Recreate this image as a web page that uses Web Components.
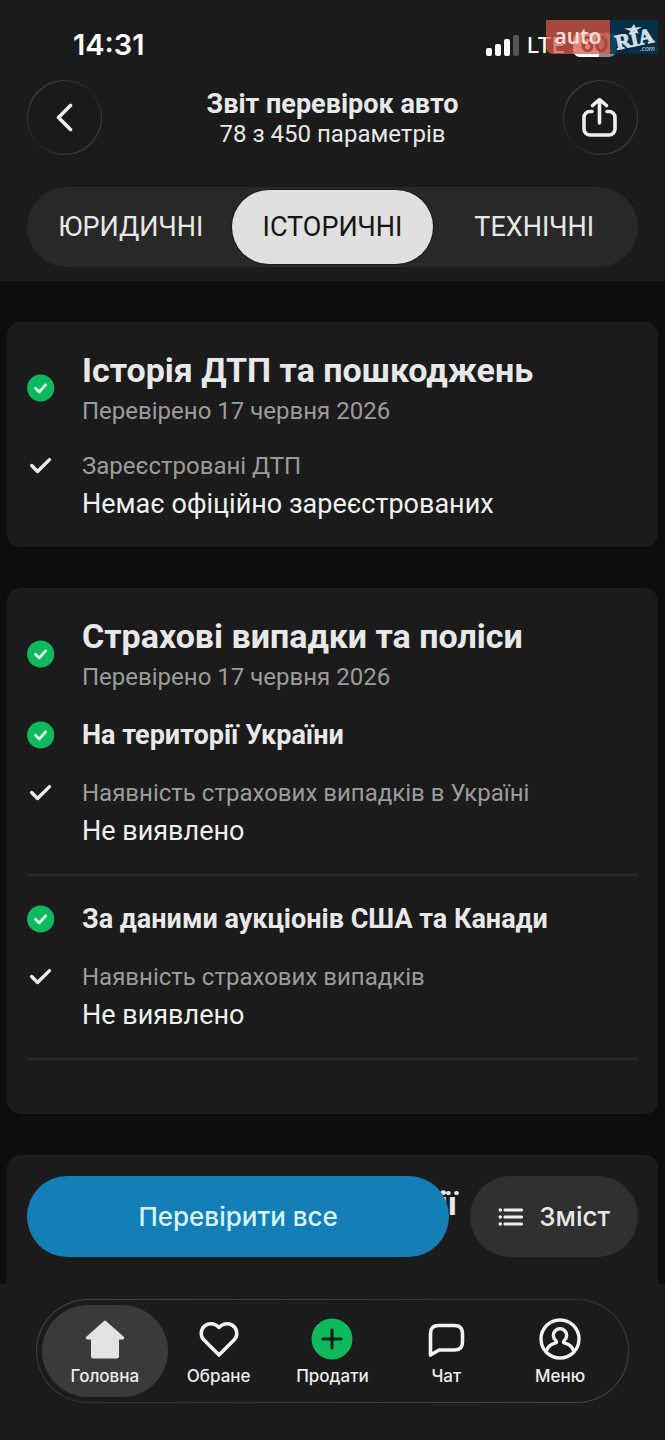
<!DOCTYPE html>
<html lang="uk">
<head>
<meta charset="UTF-8">
<meta name="viewport" content="width=device-width, initial-scale=1">
<title>Звіт перевірок авто</title>
<style>
    body {
        margin: 0;
        background: #0d0d0f;
        color: #e8e8e8;
        font-family: Roboto, "Noto Sans", sans-serif;
    }
</style>
</head>
<body>
<report-app></report-app>

<script>
const RESET = `
    * { box-sizing: border-box; }
    h1, h2, h3, p, ul, dl, dt, dd { margin: 0; padding: 0; }
    button { border: 0; padding: 0; font: inherit; color: inherit; background: none; cursor: pointer; }
    svg { display: block; }
`;

const ICONS = {
    back: `<svg width="18" height="30" viewBox="0 0 18 30" fill="none" stroke="#eee" stroke-width="3.600" stroke-linecap="round" stroke-linejoin="round"><path d="M14.500 2.500 2.500 14.500l12 12"/></svg>`,
    share: `<svg width="38" height="42" viewBox="0 0 38 42" fill="none" stroke="#eee" stroke-width="3.600" stroke-linecap="round" stroke-linejoin="round"><path d="M11 14.500H9a6 6 0 0 0-6 6V32a6 6 0 0 0 6 6h19a6 6 0 0 0 6-6V20.500a6 6 0 0 0-6-6h-2M18.500 26V3M11.500 8.500l7-6 7 6"/></svg>`,
    passed: `<svg width="28" height="28" viewBox="0 0 28 28"><circle cx="13.700" cy="14" r="13.600" fill="#0eb95e"/><path d="m8.500 14.300 3.700 3.700 6.500-7.200" fill="none" stroke="#d6fbe6" stroke-width="2.800" stroke-linecap="round" stroke-linejoin="round"/></svg>`,
    check: `<svg width="28" height="28" viewBox="0 0 28 28" fill="none" stroke="#ececec" stroke-width="3.400" stroke-linecap="round" stroke-linejoin="round"><path d="m4.700 14.500 5.800 6L22.500 8.600"/></svg>`,
    list: `<svg width="26" height="20" viewBox="0 0 26 20" fill="#eee"><circle cx="2.300" cy="3" r="1.800"/><circle cx="2.300" cy="10" r="1.800"/><circle cx="2.300" cy="17" r="1.800"/><rect x="5.500" y="1.400" width="19.500" height="3.200" rx="1.400"/><rect x="5.500" y="8.400" width="19.500" height="3.200" rx="1.400"/><rect x="5.500" y="15.400" width="19.500" height="3.200" rx="1.400"/></svg>`,
    home: `<svg width="42" height="42" viewBox="0 0 42 42" fill="#e3e3e3" stroke="#e3e3e3" stroke-width="2" stroke-linejoin="round"><path d="M21 3.500 39 19.500c.5.600.2 1-.6 1H34V38q0 1.500-1.500 1.500h-23Q8 39.500 8 38V20.500H3.600c-.8 0-1.100-.4-.6-1z"/></svg>`,
    heart: `<svg width="42" height="42" viewBox="0 0 42 42" fill="none" stroke="#f2f2f2" stroke-width="3.600" stroke-linejoin="round"><path d="M21 37 5.800 21.800C1.600 17.500 2.800 9.800 8.300 6.900c4.200-2.200 9.700-1.200 12.700 2.600 3-3.800 8.500-4.800 12.700-2.600 5.500 2.900 6.700 10.600 2.500 14.900z"/></svg>`,
    sell: `<svg width="42" height="42" viewBox="0 0 42 42"><circle cx="21" cy="21" r="20.500" fill="#0eb95e"/><path d="M21 12v18M12 21h18" stroke="#0d1d14" stroke-width="3" stroke-linecap="round"/></svg>`,
    chat: `<svg width="42" height="42" viewBox="0 0 42 42" fill="none" stroke="#f2f2f2" stroke-width="3.600" stroke-linejoin="round"><path d="M5.500 37V15.500q0-8 8-8h16q8 0 8 8v8.500q0 8-8 8H14z"/></svg>`,
    menu: `<svg width="42" height="42" viewBox="0 0 42 42" fill="none" stroke="#f2f2f2" stroke-width="3.400" stroke-linecap="round"><circle cx="21" cy="21" r="19"/><path d="M7 33.500C8.600 29 11.600 26.200 16 25.200c1.600-.4 1.900-1.100 1.200-2-1.700-1.800-2.900-3.500-2.900-5.700a6.700 6.700 0 0 1 13.400 0c0 2.200-1.200 3.900-2.900 5.700-.7.900-.4 1.600 1.200 2 4.400 1 7.400 3.800 9 8.300"/></svg>`
};

class UiIcon extends HTMLElement {
    connectedCallback() {
        this.attachShadow({ mode: 'open' }).innerHTML = `
            <style>
                :host { display: block; flex: none; }
                svg { display: block; }
            </style>
            ${ICONS[this.getAttribute('name')] || ''}
        `;
    }
}

/* Time, signal and battery */
class StatusBar extends HTMLElement {
    connectedCallback() {
        this.attachShadow({ mode: 'open' }).innerHTML = `
            <style>
                ${RESET}
                :host {
                    display: flex;
                    justify-content: space-between;
                    align-items: center;
                    height: 80px;
                    padding: 10px 49px 0 73px;
                    font-family: Inter, sans-serif;
                    color: #fff;
                }
                time { font-size: 29px; line-height: 36px; font-weight: 600; }
                .right { display: flex; align-items: center; gap: 8px; }
                .net { font-size: 22px; line-height: 24px; font-weight: 500; }
                .battery {
                    width: 43px;
                    height: 24px;
                    border-radius: 7px;
                    background: linear-gradient(90deg, #fff 60%, #8c8c8c 60%);
                    color: #1b1b1b;
                    font-size: 21px;
                    line-height: 24px;
                    font-weight: 700;
                    text-align: center;
                }
            </style>
            <time>14:31</time>
            <div class="right">
                <svg width="33" height="22" viewBox="0 0 33 22" fill="#fff"><rect y="14" width="6" height="8" rx="2"/><rect x="9" y="10" width="6" height="12" rx="2"/><rect x="18" y="5" width="6" height="17" rx="2"/><rect x="27" y="1" width="6" height="21" rx="2" fill="#555"/></svg>
                <span class="net">LTE</span>
                <span class="battery">60</span>
            </div>
        `;
    }
}

/* Logo badge that floats over the status bar */
class BrandMark extends HTMLElement {
    connectedCallback() {
        this.attachShadow({ mode: 'open' }).innerHTML = `
            <style>
                :host {
                    position: absolute;
                    top: 20px;
                    right: 7px;
                    display: flex;
                    height: 34px;
                    color: #f6dcd8;
                }
                .auto {
                    width: 64px;
                    border-radius: 0 0 0 7px;
                    background: rgba(215, 88, 74, .74);
                    font: 600 21px/32px "Noto Sans", sans-serif;
                    text-align: center;
                }
                .ria {
                    position: relative;
                    width: 48px;
                    background: rgba(0, 53, 80, .84);
                    color: #d3dde2;
                }
                .name {
                    position: absolute;
                    left: 5px;
                    top: 7px;
                    font: 700 21px/24px "Liberation Serif", serif;
                    -webkit-text-stroke: 1px #d3dde2;
                    transform: rotate(-12deg);
                }
                .com {
                    position: absolute;
                    right: 3px;
                    bottom: 1px;
                    font: italic 7px/8px "Noto Sans", sans-serif;
                }
                svg { position: absolute; left: 14px; top: 4px; }
            </style>
            <span class="auto">auto</span>
            <span class="ria">
                <svg width="18" height="11" viewBox="0 0 18 11" fill="#d3dde2"><path d="m10 0 1.500 3.500 6.500-.5-5 3 2 4-5-2.500L5 11l1.300-4L0 4.500 7.200 4z"/></svg>
                <span class="name">RIA</span>
                <span class="com">.com</span>
            </span>
        `;
    }
}

class ReportHeader extends HTMLElement {
    connectedCallback() {
        this.attachShadow({ mode: 'open' }).innerHTML = `
            <style>
                ${RESET}
                :host { display: block; position: relative; padding-bottom: 14px; background: #1b1b1b; }
                .toolbar {
                    display: flex;
                    align-items: center;
                    justify-content: space-between;
                    padding: 0 27px;
                }
                .round {
                    display: grid;
                    place-items: center;
                    width: 75px;
                    height: 75px;
                    border: 1px solid transparent;
                    border-radius: 50%;
                    background:
                        linear-gradient(#1a1a1a, #1a1a1a) padding-box,
                        linear-gradient(135deg, #505050, #242424 50%, #505050) border-box;
                }
                .heading { padding-top: 2px; text-align: center; }
                h1 { font-size: 27px; line-height: 30px; font-weight: 700; }
                p { font-size: 24px; line-height: 30px; }
            </style>
            <status-bar></status-bar>
            <div class="toolbar">
                <button class="round" aria-label="Назад"><ui-icon name="back"></ui-icon></button>
                <div class="heading">
                    <h1>Звіт перевірок авто</h1>
                    <p>78 з 450 параметрів</p>
                </div>
                <button class="round" aria-label="Поділитися"><ui-icon name="share"></ui-icon></button>
            </div>
            <slot></slot>
            <brand-mark></brand-mark>
        `;
    }
}

class SegmentTabs extends HTMLElement {
    connectedCallback() {
        const active = Number(this.getAttribute('active'));
        const tabs = this.getAttribute('items').split(',');
        this.attachShadow({ mode: 'open' }).innerHTML = `
            <style>
                ${RESET}
                :host { display: block; margin: 32px 27px 0; }
                div {
                    display: grid;
                    grid-template-columns: repeat(3, 1fr);
                    padding: 3px;
                    border-radius: 40px;
                    background: #282828;
                }
                button { height: 74px; border-radius: 37px; font-size: 27px; line-height: 36px; }
                button[aria-selected="true"] { background: #e0e0e0; color: #151515; box-shadow: 0 0 0 1px #181818; }
            </style>
            <div role="tablist">
                ${tabs.map((t, i) => `<button role="tab" aria-selected="${i === active}">${t}</button>`).join('')}
            </div>
        `;
        const buttons = this.shadowRoot.querySelectorAll('button');
        buttons.forEach(b => b.addEventListener('click', () => {
            buttons.forEach(x => x.setAttribute('aria-selected', String(x === b)));
        }));
    }
}

class CheckCard extends HTMLElement {
    connectedCallback() {
        this.attachShadow({ mode: 'open' }).innerHTML = `
            <style>
                ${RESET}
                :host {
                    display: flex;
                    flex-direction: column;
                    gap: 25px;
                    padding: 28px 20px 24px;
                    border-radius: 13px;
                    background: #1b1b1b;
                }
                header { display: flex; align-items: center; gap: 27px; }
                .text { display: flex; flex-direction: column; gap: 6px; }
                h2 { font-size: 34px; line-height: 40px; font-weight: 700; }
                p { font-size: 24px; line-height: 30px; color: #9c9c9c; }
            </style>
            <header>
                <ui-icon name="passed"></ui-icon>
                <div class="text">
                    <h2>${this.getAttribute('heading')}</h2>
                    <p>${this.getAttribute('date')}</p>
                </div>
            </header>
            <slot></slot>
        `;
    }
}

/* Next card, only its top is in view behind the action buttons */
class PeekCard extends HTMLElement {
    connectedCallback() {
        this.attachShadow({ mode: 'open' }).innerHTML = `
            <style>
                ${RESET}
                :host {
                    display: block;
                    flex: 1;
                    padding: 28px 20px 0;
                    border-radius: 13px 13px 0 0;
                    background: #1b1b1b;
                }
                h2 {
                    width: 430px;
                    font-size: 34px;
                    line-height: 40px;
                    font-weight: 700;
                    text-align: right;
                }
            </style>
            <h2><slot></slot></h2>
        `;
    }
}

class CheckGroup extends HTMLElement {
    connectedCallback() {
        this.attachShadow({ mode: 'open' }).innerHTML = `
            <style>
                ${RESET}
                :host {
                    display: flex;
                    flex-direction: column;
                    gap: 25px;
                    padding-bottom: 24px;
                    border-bottom: 2px solid #282828;
                }
                :host(:last-child) { margin-bottom: 30px; }
                header { display: flex; align-items: center; gap: 27px; }
                h3 { font-size: 27px; line-height: 36px; font-weight: 700; }
            </style>
            <header>
                <ui-icon name="passed"></ui-icon>
                <h3>${this.getAttribute('heading')}</h3>
            </header>
            <slot></slot>
        `;
    }
}

class CheckRow extends HTMLElement {
    connectedCallback() {
        this.attachShadow({ mode: 'open' }).innerHTML = `
            <style>
                ${RESET}
                :host { display: flex; align-items: flex-start; gap: 27px; }
                dl { display: flex; flex-direction: column; gap: 4px; }
                dt { font-size: 24px; line-height: 30px; color: #9c9c9c; }
                dd { font-size: 27px; line-height: 38px; color: #f0f0f0; }
            </style>
            <ui-icon name="check"></ui-icon>
            <dl>
                <dt>${this.getAttribute('label')}</dt>
                <dd>${this.getAttribute('value')}</dd>
            </dl>
        `;
    }
}

class ReportActions extends HTMLElement {
    connectedCallback() {
        this.attachShadow({ mode: 'open' }).innerHTML = `
            <style>
                ${RESET}
                :host {
                    position: absolute;
                    left: 27px;
                    right: 27px;
                    bottom: 27px;
                    display: flex;
                    gap: 21px;
                    font-family: Inter, sans-serif;
                    font-size: 26px;
                    line-height: 32px;
                    font-weight: 500;
                }
                button { height: 81px; border-radius: 41px; }
                .primary { flex: 1; background: #147fb6; color: #d9f3ff; }
                .contents {
                    display: flex;
                    align-items: center;
                    gap: 15px;
                    padding: 0 28px;
                    background: #303030;
                }
            </style>
            <button class="primary">Перевірити все</button>
            <button class="contents"><ui-icon name="list"></ui-icon>Зміст</button>
        `;
    }
}

class BottomNav extends HTMLElement {
    connectedCallback() {
        const items = [
            ['home', 'Головна'],
            ['heart', 'Обране'],
            ['sell', 'Продати'],
            ['chat', 'Чат'],
            ['menu', 'Меню']
        ];
        this.attachShadow({ mode: 'open' }).innerHTML = `
            <style>
                ${RESET}
                :host { display: block; padding: 15px 36px 37px; background: #1b1b1b; }
                ul {
                    display: grid;
                    grid-template-columns: repeat(5, 1fr);
                    padding: 5px 11px;
                    list-style: none;
                    border: 1px solid transparent;
                    border-radius: 52px;
                    background:
                        linear-gradient(#1b1b1b, #1b1b1b) padding-box,
                        linear-gradient(165deg, #484848, #303030 50%, #484848) border-box;
                }
                a {
                    display: flex;
                    flex-direction: column;
                    align-items: center;
                    gap: 4px;
                    height: 92px;
                    padding-top: 13px;
                    border-radius: 46px;
                    color: #ededed;
                    font: 500 17px/24px Inter, sans-serif;
                    text-decoration: none;
                }
                a[aria-current] { margin: 0 -6px; background: #3a3a3a; }
            </style>
            <nav>
                <ul>
                    ${items.map(([icon, label], i) => `<li><a href="#${icon}"${i === 0 ? ' aria-current="page"' : ''}><ui-icon name="${icon}"></ui-icon>${label}</a></li>`).join('')}
                </ul>
            </nav>
        `;
    }
}

class ReportApp extends HTMLElement {
    connectedCallback() {
        this.attachShadow({ mode: 'open' }).innerHTML = `
            <style>
                ${RESET}
                :host { display: flex; flex-direction: column; min-height: 100vh; }
                main {
                    position: relative;
                    flex: 1;
                    display: flex;
                    flex-direction: column;
                    gap: 41px;
                    padding: 41px 7px 0;
                }
            </style>
            <report-header>
                <segment-tabs items="ЮРИДИЧНІ,ІСТОРИЧНІ,ТЕХНІЧНІ" active="1"></segment-tabs>
            </report-header>
            <main>
                <check-card heading="Історія ДТП та пошкоджень" date="Перевірено 17 червня 2026">
                    <check-row label="Зареєстровані ДТП" value="Немає офіційно зареєстрованих"></check-row>
                </check-card>
                <check-card heading="Страхові випадки та поліси" date="Перевірено 17 червня 2026">
                    <check-group heading="На території України">
                        <check-row label="Наявність страхових випадків в Україні" value="Не виявлено"></check-row>
                    </check-group>
                    <check-group heading="За даними аукціонів США та Канади">
                        <check-row label="Наявність страхових випадків" value="Не виявлено"></check-row>
                    </check-group>
                </check-card>
                <peek-card>ії</peek-card>
                <report-actions></report-actions>
            </main>
            <bottom-nav></bottom-nav>
        `;
    }
}

customElements.define('ui-icon', UiIcon);
customElements.define('status-bar', StatusBar);
customElements.define('brand-mark', BrandMark);
customElements.define('report-header', ReportHeader);
customElements.define('segment-tabs', SegmentTabs);
customElements.define('check-card', CheckCard);
customElements.define('peek-card', PeekCard);
customElements.define('check-group', CheckGroup);
customElements.define('check-row', CheckRow);
customElements.define('report-actions', ReportActions);
customElements.define('bottom-nav', BottomNav);
customElements.define('report-app', ReportApp);
</script>
</body>
</html>
